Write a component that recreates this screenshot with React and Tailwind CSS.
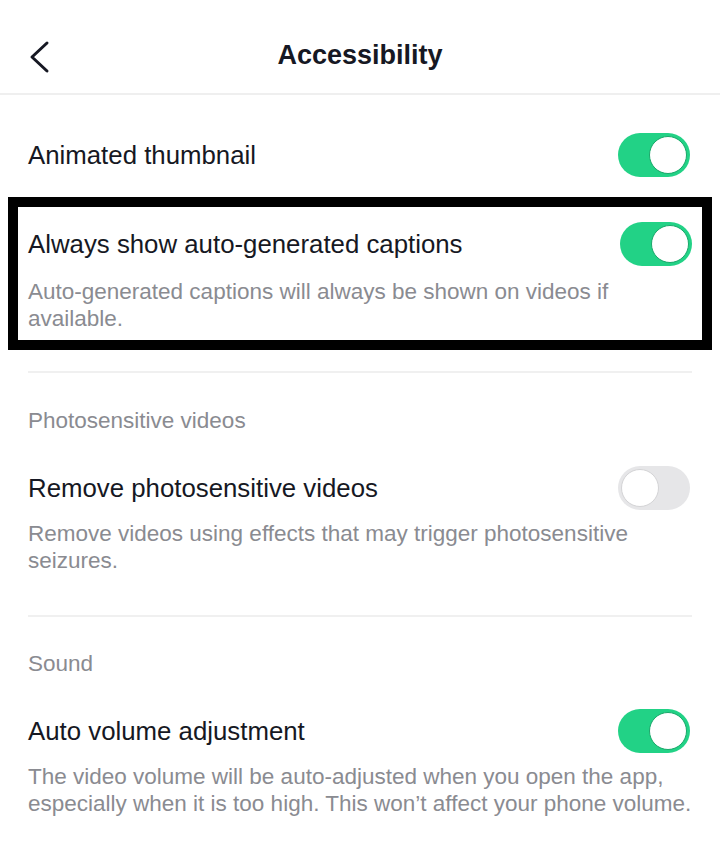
import React from "react";

const font = { fontFamily: '"Liberation Sans", Arial, sans-serif' };

function Toggle({ on }) {
  return on ? (
    <div className="flex h-[44px] w-[72px] shrink-0 items-center justify-end rounded-full bg-[#22d286] p-[3px]">
      <div className="h-[38px] w-[38px] rounded-full border border-[#1aa86a] bg-white" />
    </div>
  ) : (
    <div className="flex h-[44px] w-[72px] shrink-0 items-center justify-start rounded-full bg-[#e6e6e8] p-[3px]">
      <div className="h-[38px] w-[38px] rounded-full border border-[#d4d4d6] bg-white" />
    </div>
  );
}

function Row({ title, on }) {
  return (
    <div className="flex h-[44px] items-center justify-between">
      <span className="text-[25.8px] text-[#161823]">{title}</span>
      <Toggle on={on} />
    </div>
  );
}

function Desc({ children, className = "" }) {
  return (
    <p className={"w-[664px] text-[22.5px] leading-[27px] text-[#8a8b91] " + className}>
      {children}
    </p>
  );
}

export default function App() {
  return (
    <div className="h-[858px] w-[720px] overflow-hidden bg-white" style={font}>
      <div className="relative flex h-[95px] items-center justify-center border-b-2 border-[#efefef] pt-[17px]">
        <svg
          className="absolute left-[28px] top-[40px]"
          width="24"
          height="34"
          viewBox="0 0 24 34"
          fill="none"
        >
          <path
            d="M19 3 L4 17 L19 31"
            stroke="#161823"
            strokeWidth="3"
            strokeLinecap="round"
            strokeLinejoin="round"
          />
        </svg>
        <h1 className="text-[27px] font-bold text-[#161823]">Accessibility</h1>
      </div>

      <div className="pl-[28px] pr-[30px] pt-[38px]">
        <Row title="Animated thumbnail" on />
      </div>

      <div className="mx-[8px] mt-[20px] h-[153px] border-[10px] border-black pl-[10px] pr-[10px] pt-[15px]">
        <Row title="Always show auto-generated captions" on />
        <Desc className="mt-[12px]">
          Auto-generated captions will always be shown on videos if available.
        </Desc>
      </div>

      <div className="mx-[28px] mt-[21px] h-[2px] bg-[#f0f0f0]" />

      <div className="pl-[28px] pr-[30px]">
        <div className="mt-[34px] text-[22.5px] leading-[27px] text-[#8a8b91]">Photosensitive videos</div>
        <div className="mt-[32px]">
          <Row title="Remove photosensitive videos" />
        </div>
        <Desc className="mt-[10px]">
          Remove videos using effects that may trigger photosensitive seizures.
        </Desc>
      </div>

      <div className="mx-[28px] mt-[41px] h-[2px] bg-[#f0f0f0]" />

      <div className="pl-[28px] pr-[30px]">
        <div className="mt-[33px] text-[22.5px] leading-[27px] text-[#8a8b91]">Sound</div>
        <div className="mt-[32px]">
          <Row title="Auto volume adjustment" on />
        </div>
        <Desc className="mt-[10px]">
          The video volume will be auto-adjusted when you open the app, especially when it is too high. This won’t affect your phone volume.
        </Desc>
      </div>
    </div>
  );
}
